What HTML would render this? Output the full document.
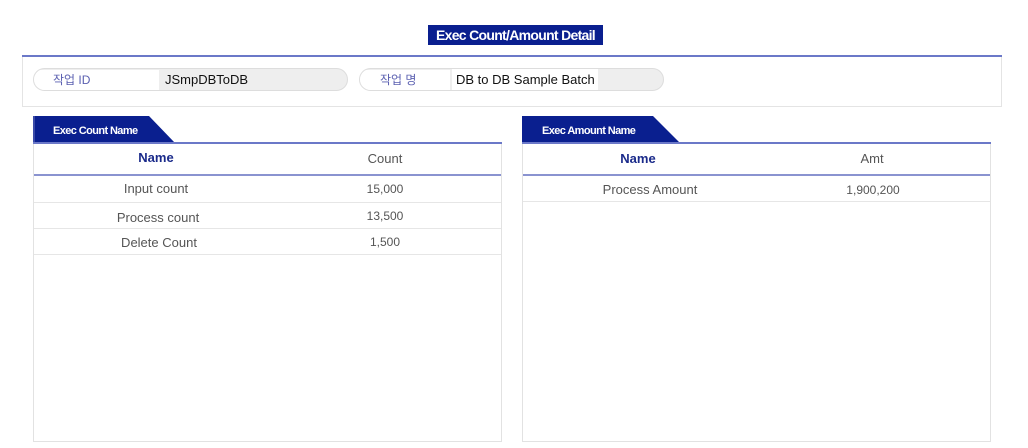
<!DOCTYPE html>
<html><head><meta charset="utf-8"><style>
*{margin:0;padding:0;box-sizing:border-box}
body{width:1028px;height:448px;background:#fff;position:relative;overflow:hidden;font-family:"Liberation Sans","Noto Sans CJK KR",sans-serif}
.a{position:absolute}
.title{left:428px;top:25px;width:175px;height:20px;background:#0a1f8f;color:#fff;font-size:14px;font-weight:bold;text-align:center;line-height:21px;letter-spacing:-0.7px}
.pill{top:68px;height:23px;border:1px solid #ddd;border-radius:12px;background:#eee;overflow:hidden}
.pl{position:absolute;left:0;top:1px;height:21px;background:#fff;color:#5a5fb0;font-size:12px;line-height:21px}
.pv{position:absolute;top:0;height:21px;font-size:13px;line-height:21px;color:#111}
.panel{border:1px solid #e2e2e2;border-top:none}
.row{position:absolute;left:0;right:0;border-bottom:1px solid #e6e6e6;font-size:13px;color:#555}
.row span{position:absolute;transform:translateX(-50%);white-space:nowrap}
</style></head><body>
<div class="a title">Exec Count/Amount Detail</div>
<div class="a" style="left:22px;top:55px;width:980px;height:2px;background:#6b78c8"></div>
<div class="a" style="left:22px;top:57px;width:980px;height:50px;border:1px solid #e4e4e4;border-top:none"></div>
<div class="a pill" style="left:33px;width:315px"><div class="pl" style="width:125px;padding-left:19px">작업 ID</div><div class="pv" style="left:131px">JSmpDBToDB</div></div>
<div class="a pill" style="left:359px;width:305px"><div class="pl" style="width:90px;padding-left:20px">작업 명</div><div class="pv" style="left:92px;width:146px;background:#fff;padding-left:4px">DB to DB Sample Batch</div></div>

<svg class="a" style="left:33px;top:116px" width="143" height="28"><polygon points="0,0 116,0 142,27 0,27" fill="#0a1f8f"/><rect x="0" y="0" width="2" height="27" fill="#3a4aa8"/><text x="20" y="18" fill="#fff" font-size="11" font-weight="bold" font-family="Liberation Sans,sans-serif" letter-spacing="-0.6">Exec Count Name</text></svg>
<div class="a" style="left:33px;top:142px;width:469px;height:2px;background:#6b78c8"></div>
<div class="a panel" style="left:33px;top:144px;width:469px;height:298px">
 <div class="row" style="top:0;height:32px;border-bottom:2px solid #8a93d0"><span style="left:122px;top:6px;color:#1a2a8a;font-weight:bold">Name</span><span style="left:351px;top:7px">Count</span></div>
 <div class="row" style="top:32px;height:27px"><span style="left:122px;top:5px">Input count</span><span style="left:351px;top:6px;font-size:12px">15,000</span></div>
 <div class="row" style="top:59px;height:26px"><span style="left:124px;top:7px">Process count</span><span style="left:351px;top:6px;font-size:12px">13,500</span></div>
 <div class="row" style="top:85px;height:26px"><span style="left:125px;top:6px">Delete Count</span><span style="left:351px;top:6px;font-size:12px">1,500</span></div>
</div>

<svg class="a" style="left:522px;top:116px" width="160" height="28"><polygon points="0,0 131,0 158,27 0,27" fill="#0a1f8f"/><text x="20" y="18" fill="#fff" font-size="11" font-weight="bold" font-family="Liberation Sans,sans-serif" letter-spacing="-0.6">Exec Amount Name</text></svg>
<div class="a" style="left:522px;top:142px;width:469px;height:2px;background:#6b78c8"></div>
<div class="a panel" style="left:522px;top:144px;width:469px;height:298px">
 <div class="row" style="top:0;height:32px;border-bottom:2px solid #8a93d0"><span style="left:115px;top:7px;color:#1a2a8a;font-weight:bold">Name</span><span style="left:349px;top:7px">Amt</span></div>
 <div class="row" style="top:32px;height:26px"><span style="left:127px;top:6px">Process Amount</span><span style="left:350px;top:7px;font-size:12px">1,900,200</span></div>
</div>
</body></html>
